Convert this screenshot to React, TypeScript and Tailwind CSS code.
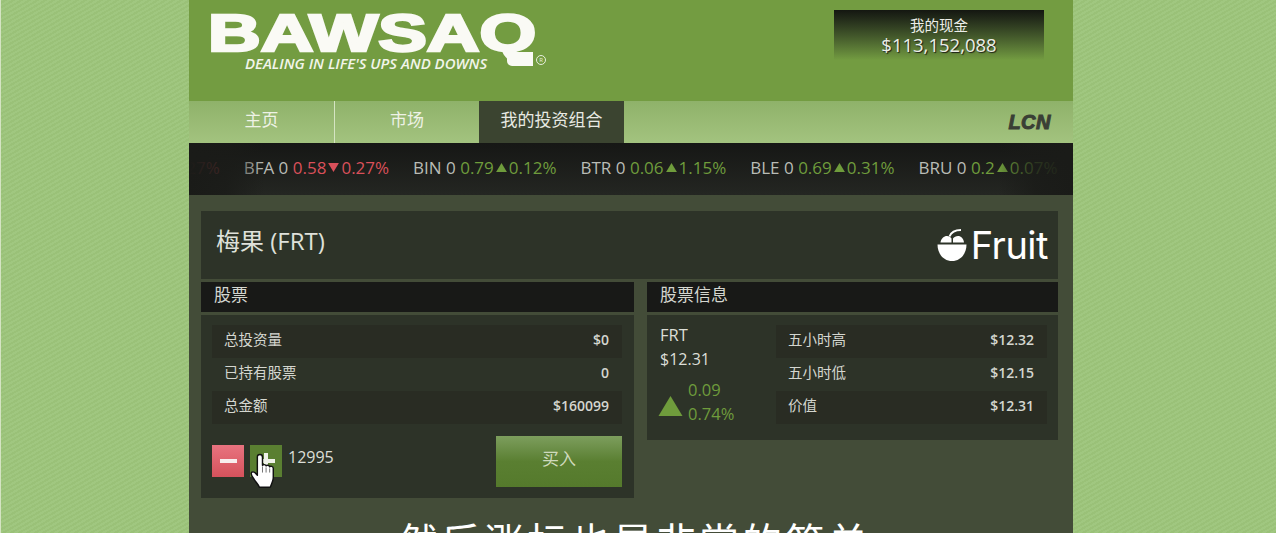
import React from "react";

const SANS = "font-['Open_Sans','Noto_Sans_CJK_SC',sans-serif]";

function Tri({ up, className = "" }: { up: boolean; className?: string }) {
  return (
    <svg viewBox="0 0 12 10" className={className} aria-hidden="true">
      <polygon points={up ? "6,0 12,10 0,10" : "0,0 12,0 6,10"} fill="currentColor" />
    </svg>
  );
}

function Tick({ s, v, p, up }: { s: string; v: string; p: string; up: boolean }) {
  const col = up ? "text-[#6f9c3c]" : "text-[#d9505a]";
  return (
    <div className="flex shrink-0 items-center whitespace-nowrap">
      <span className="text-[#b9bcb6]">{s} 0&nbsp;</span>
      <span className={col}>{v}</span>
      <Tri up={up} className={`mx-[2px] h-[9px] w-[11px] ${col}`} />
      <span className={col}>{p}</span>
    </div>
  );
}

function Row({ k, v, dark }: { k: string; v: string; dark?: boolean }) {
  return (
    <div className={`flex h-[33px] items-center justify-between pb-[4px] pl-3 pr-[13px] text-[14.5px] text-[#d4d6cf] ${dark ? "bg-[#292c23]" : ""}`}>
      <span>{k}</span>
      <span className="text-[14px] font-semibold">{v}</span>
    </div>
  );
}

function Head({ t, cls }: { t: string; cls: string }) {
  return (
    <div className={`flex h-[30px] items-center bg-[#181917] pb-[4px] text-[17px] text-[#d4d6cf] ${cls}`}>{t}</div>
  );
}

export default function App() {
  return (
    <div className={`relative flex h-[533px] w-full justify-center overflow-hidden bg-[#9dc47d] bg-[repeating-linear-gradient(150deg,#a0c780_0px,#a0c780_2px,#9ac178_2px,#9ac178_4px)] ${SANS}`}>
      <div className="absolute inset-y-0 left-0 w-px bg-[#d5e4c3]" />
      <div className="ml-[-14px] flex w-[884px] shrink-0 flex-col">
        {/* Header */}
        <header className="flex h-[101px] shrink-0 justify-between bg-[#739c41] pl-[21px] pr-[29px]">
          <div className="relative pt-[7px]">
            <div className="relative h-[49px] w-[326px]">
              <span className="ml-[-2px] block origin-top-left scale-x-[1.43] whitespace-nowrap font-['Liberation_Sans',sans-serif] text-[51px] font-bold leading-[54px] text-[#fafaf5] [-webkit-text-stroke:2.5px_#fafaf5]">
                BAWSAQ
              </span>
              <span className="absolute left-[297px] top-[45px] h-[14px] w-[26px] rounded-bl-[5px] bg-[#fafaf5]" />
              <span className="absolute left-[326px] top-[48px] flex h-[10px] w-[10px] items-center justify-center rounded-full border border-[#e8efdd] text-[6px] leading-none text-[#e8efdd]">
                R
              </span>
            </div>
            <div className="ml-[35px] whitespace-nowrap text-[14.950px] font-semibold italic leading-[14px] text-[#f2f5ea]">
              DEALING IN LIFE'S UPS AND DOWNS
            </div>
          </div>
          <div className="mt-[10px] flex h-[50px] w-[210px] flex-col items-center bg-gradient-to-b from-[#141711] to-[#739c41] pt-[6px] text-[#eceee8]">
            <span className="text-[14.5px] leading-[19px]">我的现金</span>
            <span className="mt-[-1px] text-[18.500px] font-medium leading-[21px] [text-shadow:1px_1px_1px_#1a1d15]">$113,152,088</span>
          </div>
        </header>

        {/* Nav */}
        <nav className="flex h-[42px] shrink-0 items-stretch justify-between bg-gradient-to-b from-[#8fb26a] to-[#a3c37f] pr-[22px]">
          <div className="flex items-stretch text-[17px]">
            <div className="flex w-[146px] items-center justify-center border-r border-[#d5e4c3] pb-[5px] text-[#eef2e6]">主页</div>
            <div className="flex w-[144px] items-center justify-center pb-[5px] text-[#eef2e6]">市场</div>
            <div className="flex w-[145px] items-center justify-center bg-[#3b4430] pb-[5px] text-[#e8eae3]">我的投资组合</div>
          </div>
          <span className="self-center whitespace-nowrap font-['Liberation_Sans',sans-serif] text-[20px] font-bold italic tracking-[0.5px] text-[#3a3f35] [-webkit-text-stroke:1px_#3a3f35]">
            LCN
          </span>
        </nav>

        {/* Ticker */}
        <div className="relative flex h-[52px] shrink-0 items-center gap-6 overflow-hidden bg-gradient-to-b from-[#161715] to-[#242622] pb-[3px] text-[17px]">
          <span className="ml-[-17px] shrink-0 text-[#d9505a]">0.27%</span>
          <Tick s="BFA" v="0.58" p="0.27%" up={false} />
          <Tick s="BIN" v="0.79" p="0.12%" up />
          <Tick s="BTR" v="0.06" p="1.15%" up />
          <Tick s="BLE" v="0.69" p="0.31%" up />
          <Tick s="BRU" v="0.2" p="0.07%" up />
          <div className="absolute inset-y-0 left-0 w-[75px] bg-gradient-to-r from-[#1a1b18] via-[#1a1b18cc] to-transparent" />
          <div className="absolute inset-y-0 right-0 w-[75px] bg-gradient-to-l from-[#1a1b18] via-[#1a1b18cc] to-transparent" />
        </div>

        {/* Content */}
        <main className="flex-1 bg-[#434c38] px-[12px] pt-[16px]">
          <div className="mr-[3px] flex h-[68px] items-center justify-between bg-[#2d3328] pl-[15px] pr-[10px]">
            <span className="pb-[9px] text-[24px] text-[#dfe1da]">梅果 (FRT)</span>
            <div className="flex items-center pb-[1px] text-white">
              <svg viewBox="0 0 30 32" className="h-[32px] w-[30px]" aria-hidden="true">
                <path d="M0.500 15.500h29C29.500 25 23.500 32 15 32S0.500 25 0.500 15.500z" fill="#fff" />
                <path d="M3.500 13.500C4 9.500 7 7 10 7c2 0 3.500 1 4.500 2.500v4z" fill="#fff" />
                <path d="M16 13.500v-4C17 8 19 7 21 7c3 0 5.500 2.500 6 6.500z" fill="#fff" />
                <path d="M12.500 7.500C14 3.500 18 1 24 1" fill="none" stroke="#fff" strokeWidth="2" />
              </svg>
              <span className="ml-[4px] font-['Inter',sans-serif] text-[38px] font-normal leading-[36px] tracking-[-0.5px]">Fruit</span>
            </div>
          </div>

          <div className="mr-[3px] mt-[3px] flex items-start gap-[13px]">
            <section className="w-[433px] shrink-0">
              <Head t="股票" cls="pl-[13px]" />
              <div className="mt-[3px] h-[183px] bg-[#2d3328] px-[11px] pt-[10px]">
                <div className="w-[410px]">
                  <Row k="总投资量" v="$0" dark />
                  <Row k="已持有股票" v="0" />
                  <Row k="总金额" v="$160099" dark />
                </div>
                <div className="relative mt-[12px] flex items-start">
                  <button className="mt-[9px] flex h-[32px] w-[32px] items-center justify-center bg-gradient-to-b from-[#e8737f] to-[#d5525c]">
                    <span className="h-[4px] w-[17px] bg-[#f8eeee]" />
                  </button>
                  <button className="ml-[6px] mt-[9px] flex h-[32px] w-[32px] items-center justify-center bg-[#5a7f31]">
                    <span className="relative h-[4px] w-[17px] bg-[#f0f3e8]">
                      <span className="absolute left-[6.500px] top-[-6.500px] h-[17px] w-[4px] bg-[#f0f3e8]" />
                    </span>
                  </button>
                  <span className="ml-[6px] mt-[10px] text-[16px] leading-[22px] text-[#dcded7]">12995</span>
                  <button className="ml-auto mr-[1px] flex h-[51px] w-[126px] items-center justify-center bg-gradient-to-b from-[#7d9e5d] via-[#5a7f31] to-[#557a2c] pb-[5px] text-[17px] text-[#cfdabd]">
                    买入
                  </button>
                  <svg viewBox="0 0 26 36" className="absolute left-[37px] top-[16px] h-[37px] w-[28px]" aria-hidden="true">
                    <path
                      d="M10 2.500c1.500 0 2.500 1 2.500 2.500v8c.5-1 3-1 3.500.5.500-1 3-1 3.500.8.800-.8 3.500-.5 3.500 1.500v9c0 3-2 7-3 9.500H9.500c-1-2.500-3-4.500-5-7.500-1-1.500-3-4-3-6 0-1.500 2-2 3.500-.8l2.500 2.500V5c0-1.500 1-2.500 2.500-2.500z"
                      fill="#fff"
                      stroke="#111"
                      strokeWidth="1.400"
                      strokeLinejoin="round"
                    />
                    <path d="M12.500 14v6M16 15v5M19.500 16v4" stroke="#555" strokeWidth="0.800" fill="none" />
                  </svg>
                </div>
              </div>
            </section>

            <section className="min-w-0 flex-1">
              <Head t="股票信息" cls="pl-[13px]" />
              <div className="mt-[3px] flex h-[125px] bg-[#2d3328] pl-[13px] pr-[11px] pt-[10px]">
                <div className="w-[116px] shrink-0 text-[16px] text-[#dcded7]">
                  <div className="mt-[-2px] text-[16.500px] leading-[24px]">FRT</div>
                  <div className="font-medium leading-[24px]">$12.31</div>
                  <div className="mt-[7px] flex items-end">
                    <Tri up className="mb-[10px] ml-[-2px] h-[20px] w-[25px] text-[#6f9c3c]" />
                    <div className="ml-[5px] text-[16.500px] leading-[24px] text-[#6f9c3c]">
                      <div>0.09</div>
                      <div>0.74%</div>
                    </div>
                  </div>
                </div>
                <div className="min-w-0 flex-1">
                  <Row k="五小时高" v="$12.32" dark />
                  <Row k="五小时低" v="$12.15" />
                  <Row k="价值" v="$12.31" dark />
                </div>
              </div>
            </section>
          </div>
        </main>
      </div>

      <div className="absolute left-[398px] top-[514px] whitespace-nowrap text-[40px] leading-[52px] tracking-[3px] text-white font-['Noto_Sans_CJK_SC',sans-serif]">
        然后涨标也是非常的简单
      </div>
    </div>
  );
}
